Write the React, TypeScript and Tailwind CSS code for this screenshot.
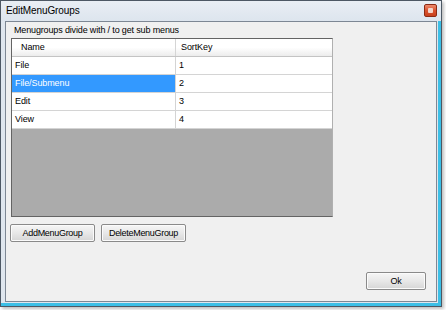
const rows = [
  { name: "File", key: "1" },
  { name: "File/Submenu", key: "2", selected: true },
  { name: "Edit", key: "3" },
  { name: "View", key: "4" },
];

function WinButton({ label, width }: { label: string; width: string }) {
  return (
    <button
      className={`${width} h-[18px] rounded-[2px] border border-[#8a8a8a] bg-gradient-to-b from-[#f6f6f6] via-[#e8e8e8] to-[#d6d6d6] text-[9px] tracking-[-0.3px] text-black leading-none shadow-[inset_0_0_0_1px_#fbfbfb]`}
    >
      {label}
    </button>
  );
}

export default function App() {
  return (
    <div className="w-[446px] h-[310px] bg-white font-['Liberation_Sans',Arial,sans-serif]">
      <div className="w-[442px] h-[307px] border border-[#4d5864] bg-[#dfe6ee] flex flex-col shadow-[inset_-3px_-3px_0_#3cbfe6,2px_2px_3px_rgba(0,0,0,0.25)]">
        {/* title bar */}
        <div className="h-[20px] flex items-start bg-gradient-to-b from-[#e9eef4] to-[#dde5ee]">
          <span className="ml-[5px] mt-[4px] text-[10px] tracking-[-0.1px] text-black leading-[12px]">
            EditMenuGroups
          </span>
          <div className="ml-auto mr-[4px] mt-[3px] w-[13px] h-[13px] rounded-[2px] border border-[#8c2a14] bg-gradient-to-b from-[#ee8a6c] via-[#d9532f] to-[#c8401c] flex items-center justify-center">
            <div className="w-[5px] h-[5px] bg-[#f3d6cc] rounded-[1px]" />
          </div>
        </div>

        {/* client area */}
        <div className="ml-[4px] w-[432px] h-[281px] border border-[#7d8794] bg-[#f0f0f0] flex flex-col">
          <div className="ml-[8px] mt-[2px] h-[13px] text-[9px] tracking-[-0.15px] leading-[13px] text-black">
            Menugroups divide with / to get sub menus
          </div>

          {/* grid */}
          <div className="ml-[5px] mt-[1px] w-[322px] h-[179px] border border-[#646464] border-r-[#b0b0b0] bg-[#ababab] flex flex-col text-[9px] tracking-[-0.1px] text-black">
            <div className="flex h-[18px] border-b border-[#c4c4c4] bg-gradient-to-b from-white via-white to-[#ececec]">
              <div className="w-[164px] border-r border-[#d5d5d5] pl-[9px] leading-[17px]">Name</div>
              <div className="flex-1 pl-[5px] leading-[17px]">SortKey</div>
            </div>
            {rows.map((r) => (
              <div key={r.name} className="flex h-[18px] border-b border-[#d4d4d4] bg-white">
                <div
                  className={`w-[164px] border-r border-[#d4d4d4] pl-[3px] leading-[17px] ${
                    r.selected ? "bg-[#3399ff] text-white" : ""
                  }`}
                >
                  {r.name}
                </div>
                <div className="flex-1 pl-[3px] leading-[17px]">{r.key}</div>
              </div>
            ))}
          </div>

          {/* buttons */}
          <div className="ml-[4px] mt-[7px] flex gap-[6px]">
            <WinButton label="AddMenuGroup" width="w-[85px]" />
            <WinButton label="DeleteMenuGroup" width="w-[85px]" />
          </div>

          <div className="flex-1" />
          <div className="flex justify-end mr-[10px] mb-[11px]">
            <WinButton label="Ok" width="w-[60px]" />
          </div>
        </div>
      </div>
    </div>
  );
}
